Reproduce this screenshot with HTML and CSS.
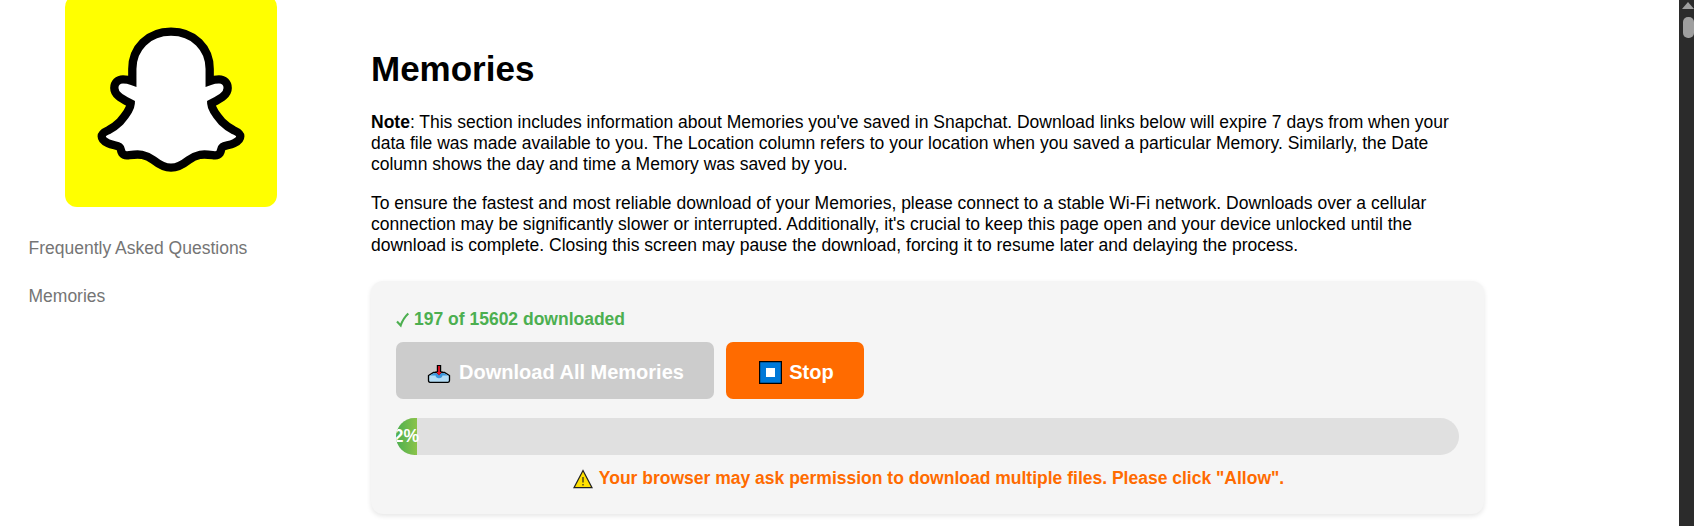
FILE: index.html
```html
<!DOCTYPE html>
<html lang="en">
<head>
<meta charset="utf-8">
<title>Memories</title>
<link rel="stylesheet" href="styles.css">
</head>
<body>
<div class="page">
  <aside class="sidebar">
    <svg class="logo" viewBox="0 0 212 212">
      <rect width="212" height="212" rx="12" fill="#ffff00"/>
      <path d="M106 36.700C83 36.700 67.300 53 67.300 74V86C64 84.800 61 84.300 58 84.300C53 84.300 49.300 88 49.300 93C49.300 100 56.500 103.500 65.700 108.500C65.500 113 60 121 55 126.700C50.500 131 47 133.500 43.300 135.300C39.500 137 36.700 138.500 36.700 141.300C36.700 144.500 39 146.500 43 148.300C47.500 150.300 52 150.500 54.500 152C56.500 153.500 55.500 156 57 158C58.500 160 60 160.500 62.500 160.300C67 159.800 72 159 76.700 159.800C82 161 85 162.500 88.300 165C94 169.500 99 172.700 106 172.700C113 172.700 118 169.500 123.700 165C127 162.500 130 161 135.300 159.800C140 159 145 159.800 149.500 160.300C152 160.500 153.500 160 155 158C156.500 156 155.500 153.500 157.500 152C160 150.500 164.500 150.300 169 148.300C173 146.500 175.300 144.500 175.300 141.300C175.300 138.500 172.500 137 168.700 135.300C165 133.500 161.500 131 157 126.700C152 121 146.500 113 146.300 108.500C155.500 103.500 162.700 100 162.700 93C162.700 88 159 84.300 154 84.300C151 84.300 148 84.800 144.700 86V74C144.700 53 129 36.700 106 36.700Z" fill="#fff" stroke="#000" stroke-width="8.300"/>
    </svg>
    <nav class="nav">
      <a>Frequently Asked Questions</a>
      <a>Memories</a>
    </nav>
  </aside>
  <main class="content">
    <h1>Memories</h1>
    <p><b>Note</b>: This section includes information about Memories you've saved in Snapchat. Download links below will expire 7 days from when your<br>data file was made available to you. The Location column refers to your location when you saved a particular Memory. Similarly, the Date<br>column shows the day and time a Memory was saved by you.</p>
    <p>To ensure the fastest and most reliable download of your Memories, please connect to a stable Wi-Fi network. Downloads over a cellular<br>connection may be significantly slower or interrupted. Additionally, it's crucial to keep this page open and your device unlocked until the<br>download is complete. Closing this screen may pause the download, forcing it to resume later and delaying the process.</p>
    <section class="card">
      <div class="status">
        <svg class="check" viewBox="0 0 14 16"><path d="M1 9.500L4.700 13.500Q7 6.500 12.300 1.500" fill="none" stroke="currentColor" stroke-width="2.100"/></svg>
        <span>197 of 15602 downloaded</span>
      </div>
      <div class="buttons">
        <button class="btn download">
          <svg class="inbox" viewBox="0 0 24 20"><path d="M1.500 11.500L6.500 8.500H17.500L22.500 11.500V16.500Q22.500 18.300 21 18.300H3Q1.500 18.300 1.500 16.500Z" fill="#b3dcf5" stroke="#000" stroke-width="1.300"/><path d="M3 11.500L7 9.200H17L21 11.500H15.500Q15 14.200 12 14.200T8.500 11.500Z" fill="#3a96dd"/><path d="M9.800 1H14.200V7.500H16L12 11L8 7.500H9.800Z" fill="#000"/><path d="M11.100 2H12.900V8H14.500L12 11.500L9.500 8H11.100Z" fill="#e81224"/></svg>
          <span>Download All Memories</span>
        </button>
        <button class="btn stop">
          <svg class="square" viewBox="0 0 23 23"><path d="M.6.600H22.400V22.400H.6Z" fill="#0078d7" stroke="#000" stroke-width="1.200"/><path d="M7 7H16V16H7Z" fill="#fff"/></svg>
          <span>Stop</span>
        </button>
      </div>
      <div class="progress"><div class="fill">2%</div></div>
      <div class="warning">
        <svg class="triangle" viewBox="0 0 20 20"><path d="M10 1.500L19 18.700H1Z" fill="#ffe000" stroke="#222" stroke-width="1.200"/><path d="M10 8V13.500M10 15V16.600" stroke="#222" stroke-width="1.200"/></svg>
        <span>Your browser may ask permission to download multiple files. Please click "Allow".</span>
      </div>
    </section>
  </main>
  <div class="scrollbar"><div class="arrow"></div><div class="thumb"></div></div>
</div>
</body>
</html>
```
FILE: styles.css
```css
* { box-sizing: border-box; }
body { margin: 0; background: #fff; color: #000; font: 17.5px/21px "Liberation Sans", Arial, sans-serif; overflow: hidden; }
.page { display: flex; height: 526px; overflow: hidden; }
.sidebar { width: 371px; flex: none; }
.logo { display: block; width: 212px; height: 212px; margin: -5px 0 0 65px; }
.nav { display: flex; flex-direction: column; gap: 27px; padding: 31px 0 0 28.5px; color: #757575; }
.content { width: 1113px; flex: none; white-space: nowrap; }
h1 { margin: 49px 0 0; font-size: 35px; line-height: 40px; }
p { margin: 0; }
h1 + p { margin-top: 23px; }
p + p { margin-top: 18px; }
.card { height: 233px; margin-top: 25px; padding: 28px 25px 0; border-radius: 12px; background: #f5f5f5; box-shadow: 0 2px 5px rgba(0,0,0,.1); font-weight: bold; }
.status { display: flex; align-items: center; gap: 4px; color: #4caf50; }
.check { width: 14px; height: 16px; }
.buttons { display: flex; gap: 12px; margin-top: 12px; }
.btn { display: flex; align-items: center; justify-content: center; height: 57px; border: 0; border-radius: 7px; padding: 2px 0 0 1px; color: #fff; font: bold 20px/24px "Liberation Sans", Arial, sans-serif; gap: 8px; }
.btn.download { width: 318px; background: #ccc; }
.btn.stop { width: 138px; background: #ff6b00; padding-left: 3px; gap: 7px; }
.inbox { width: 24px; height: 20px; margin-top: 5px; }
.square { width: 23px; height: 23px; margin-top: 1px; }
.progress { height: 37px; margin-top: 19px; border-radius: 19px; background: #e0e0e0; overflow: hidden; }
.fill { display: flex; align-items: center; justify-content: center; width: 21px; height: 37px; background: linear-gradient(90deg, #4caf50, #8bc34a); color: #fff; }
.warning { display: flex; align-items: center; justify-content: center; gap: 6px; margin-top: 13px; padding-left: 2px; color: #ff6b00; }
.triangle { width: 20px; height: 20px; }
.scrollbar { display: flex; flex-direction: column; align-items: flex-end; width: 15px; height: 526px; margin-left: auto; background: #2b2b2b; }
.arrow { width: 12px; height: 7px; margin-top: 2px; background: #9f9f9f; clip-path: polygon(50% 0, 100% 100%, 0 100%); }
.thumb { width: 11px; height: 21px; margin-top: 8px; border-radius: 5px; background: #9f9f9f; }
```
